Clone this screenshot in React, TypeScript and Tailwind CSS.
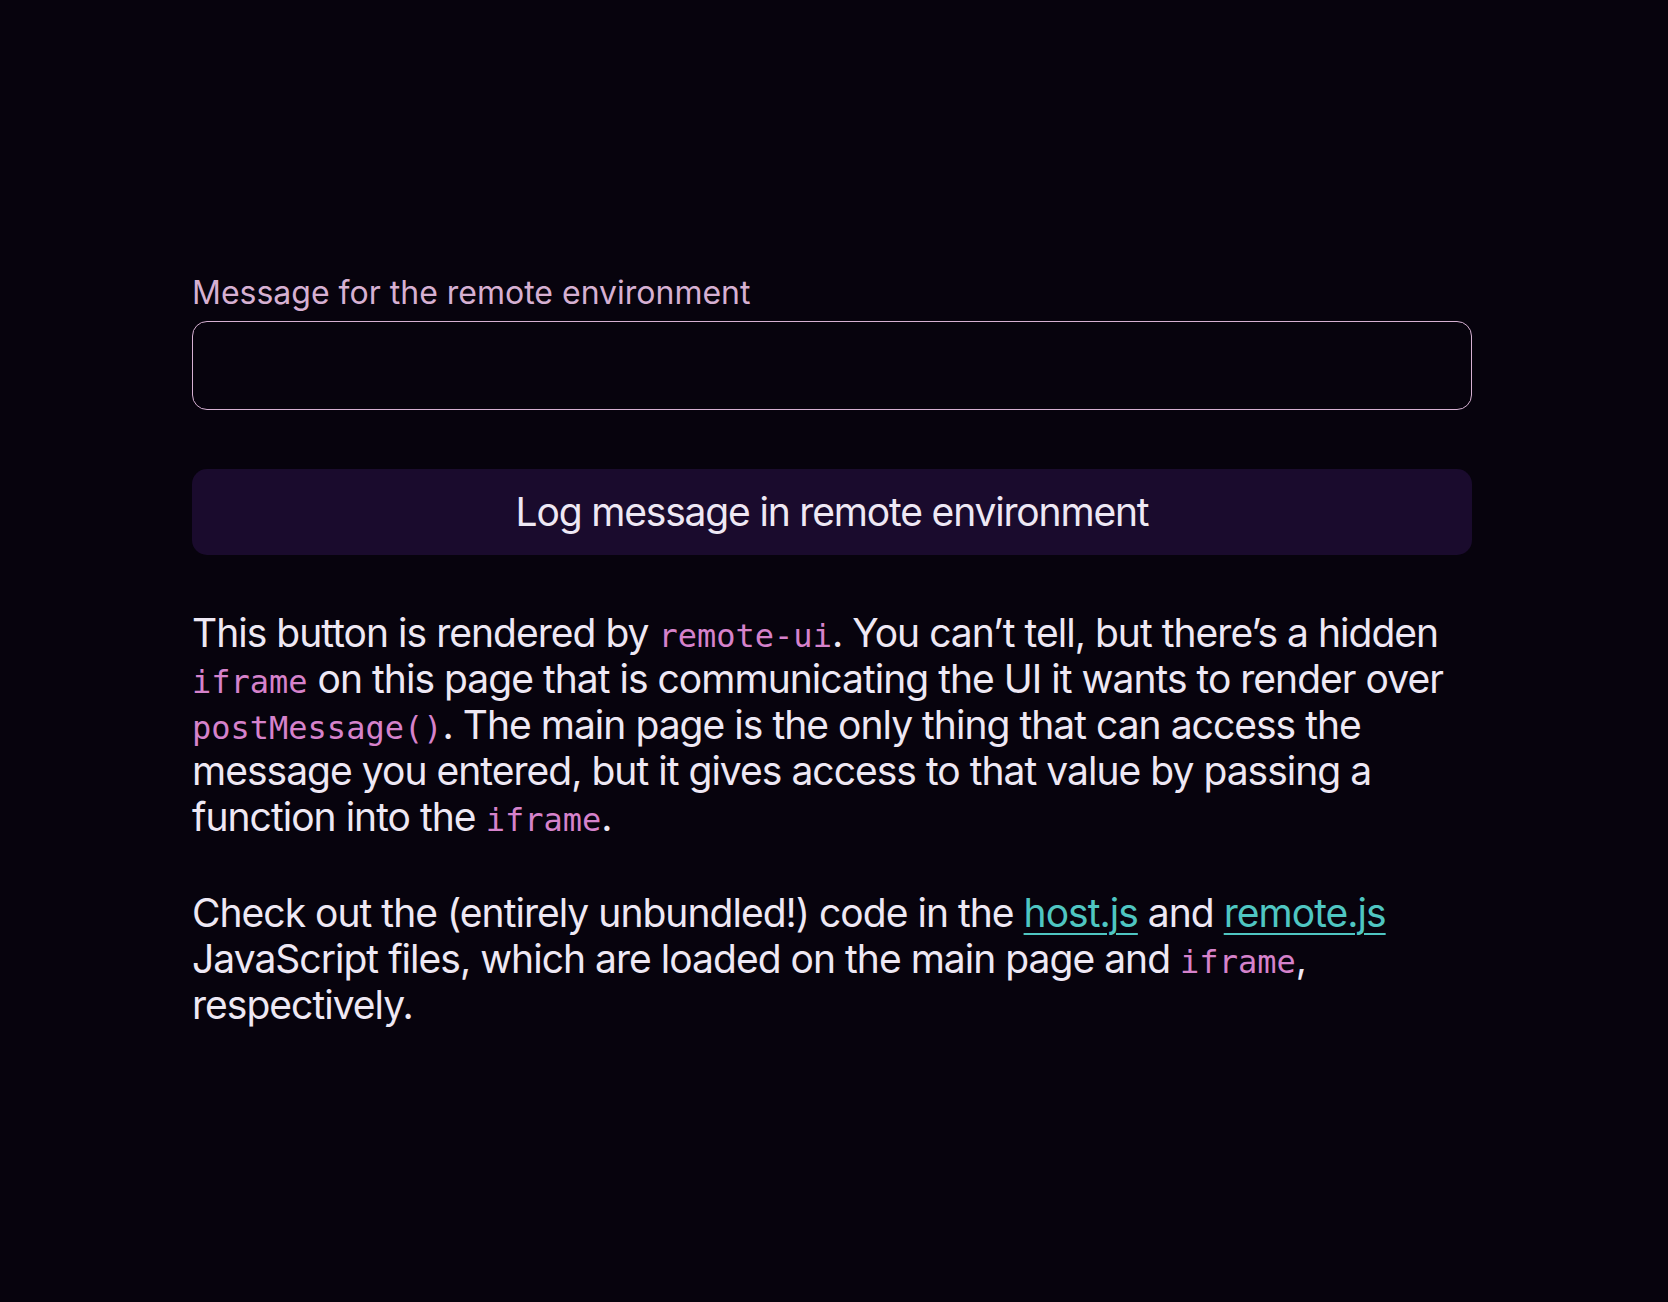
const Code = ({ children }: { children: string }) => (
  <code className="font-['DejaVu_Sans_Mono',monospace] text-[32px] leading-none tracking-normal text-[#d682cb]">
    {children}
  </code>
);

export default function App() {
  return (
    <div className="min-h-[1302px] bg-[#07030d] font-['Inter',sans-serif] text-[#eee8f4]">
      <div className="ml-[192px] w-[1280px] pt-[274px]">
        <label className="block text-[32px] leading-[38px] text-[#d6b0d2]">
          Message for the remote environment
        </label>
        <input
          type="text"
          className="mt-[9px] block h-[89px] w-full rounded-[15px] border-[1.5px] border-[#d6b0d2] bg-[#07030d] px-5 text-[32px] text-[#eee8f4] outline-none"
        />
        <button className="mt-[59px] block h-[86px] w-full rounded-[15px] bg-[#1a0b2d] text-[39px] tracking-[-0.03em] text-[#eee8f4]">
          Log message in remote environment
        </button>
        <div className="mt-[55px] text-[39px] leading-[46px] tracking-[-0.025em]">
          <p>
            This button is rendered by <Code>remote-ui</Code>. You can’t tell, but there’s a hidden{" "}
            <Code>iframe</Code> on this page that is communicating the UI it wants to render over{" "}
            <Code>postMessage()</Code>. The main page is the only thing that can access the message
            you entered, but it gives access to that value by passing a function into the{" "}
            <Code>iframe</Code>.
          </p>
          <p className="mt-[50px]">
            Check out the (entirely unbundled!) code in the{" "}
            <a href="#" className="text-[#4fc6c2] underline decoration-2 underline-offset-[6px]">host.js</a> and{" "}
            <a href="#" className="text-[#4fc6c2] underline decoration-2 underline-offset-[6px]">remote.js</a>{" "}
            JavaScript files, which are loaded on the main page and <Code>iframe</Code>, respectively.
          </p>
        </div>
      </div>
    </div>
  );
}
